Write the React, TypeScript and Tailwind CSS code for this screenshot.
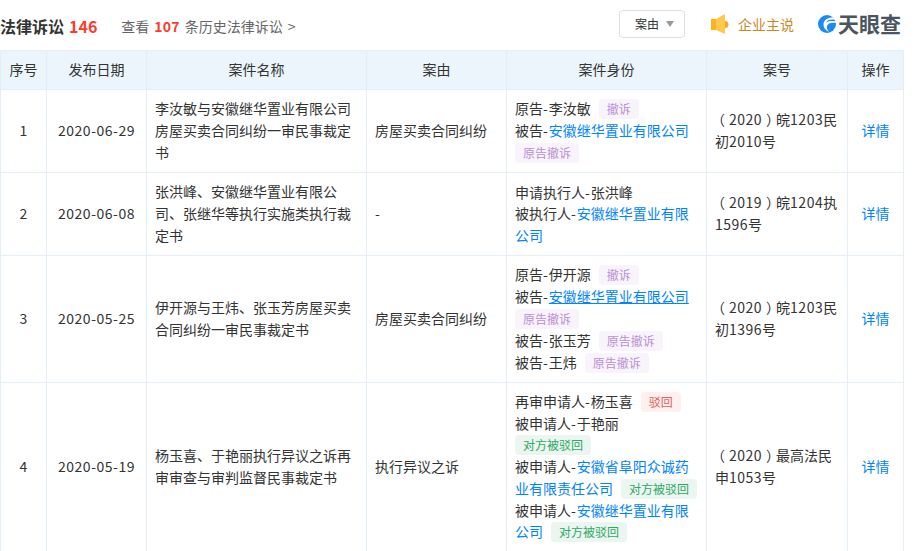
const font = { fontFamily: '"Noto Sans CJK SC", sans-serif' };

function Tag({ c, children }: { c: "p" | "r" | "g"; children: React.ReactNode }) {
  const cls =
    c === "p"
      ? "bg-[#f9f4fc] text-[#b88fd6]"
      : c === "r"
      ? "bg-[#fdf0ef] text-[#e8605a]"
      : "bg-[#ebf6f0] text-[#2da866]";
  return <span className={`inline-block align-top my-px h-5 leading-5 px-2 text-xs rounded-sm ${cls}`}>{children}</span>;
}

function A({ u, children }: { u?: boolean; children: React.ReactNode }) {
  return <span className={`text-[#0084ff] ${u ? "underline" : ""}`}>{children}</span>;
}

function D() {
  return <span className="tracking-[1px]">-</span>;
}

function Num({ y, a, n1, b, n2 }: { y: string; a: string; n1?: string; b: string; n2: string }) {
  return (
    <>
      <span className="-ml-1 mr-1">（</span>
      <span className="tracking-[0.5px]">{y}</span>
      <span className="ml-1 -mr-1">）</span>
      {a}
      {n1 && <span className="tracking-[0.5px]">{n1}</span>}
      {b}
      <span className="tracking-[0.5px]">{n2}</span>号
    </>
  );
}

const cell = "border-r border-b border-[#e4eef6]";

function Row({ n, date, name, cause, num, h, children }: any) {
  return (
    <tr className={h}>
      <td className={`${cell} border-l text-center pb-[2px]`}>{n}</td>
      <td className={`${cell} text-center tracking-[0.5px] pb-[2px]`}>{date}</td>
      <td className={`${cell} px-2 pb-[2px]`}>{name}</td>
      <td className={`${cell} px-2 pb-[2px]`}>{cause}</td>
      <td className={`${cell} px-2 py-2 leading-[21.6px]`}>{children}</td>
      <td className={`${cell} px-2 pb-[2px]`}>{num}</td>
      <td className={`${cell} text-center text-[#0084ff] pb-[2px]`}>详情</td>
    </tr>
  );
}

export default function App() {
  return (
    <div style={font} className="w-[917px] h-[551px] overflow-hidden bg-white text-sm leading-[22px] text-[#333]">
      <div className="h-[50px] flex items-center w-[904px] pr-[3px]">
        <div className="flex items-center mt-[2px]">
          <span className="text-base font-bold text-[#333]">法律诉讼</span>
          <span className="text-base font-bold text-[#ff3b30] ml-[5px]">146</span>
          <span className="ml-[24px] text-[#666]">查看</span>
          <span className="ml-[5px] font-bold text-[#ff3b30] tracking-[0.2px]">107</span>
          <span className="ml-[5px] text-[#666]">条历史法律诉讼</span>
          <span className="ml-[5px] text-[#666]">&gt;</span>
        </div>
        <div className="ml-auto flex items-center -mt-[2px]">
          <div className="w-[66px] h-7 border border-[#dddddd] rounded-sm flex items-center pl-[15px] text-xs text-[#333]">
            <span>案由</span>
            <span className="ml-[7px] w-0 h-0 border-x-[4px] border-x-transparent border-t-[6px] border-t-[#999999]" />
          </div>
          <svg className="ml-[26px]" width="19" height="20" viewBox="0 0 19 20">
            <rect x="0" y="5" width="5" height="11" fill="#fdb21e" />
            <path d="M5 5 L14 0 V20 L5 16 Z" fill="#fdc94f" />
            <path d="M14 7 A3.5 3.5 0 0 1 14 14 Z" fill="#f9a825" />
          </svg>
          <span className="ml-2 text-[#c98a1d]">企业主说</span>
          <svg className="ml-6" width="18" height="18" viewBox="0 0 18 18">
            <circle cx="9" cy="9" r="9" fill="#1a8cf0" />
            <path d="M18 3 C12 1.5 6 4 5.5 9 C5.2 12 7 15 11 17 C8 13 8.5 10 11 8.5 C13 7.5 15.5 7.5 18 8 Z" fill="#fff" />
            <path d="M17 5 C13 3.8 9.5 5 8 7.5 C10 6 13.5 5.5 17 6.2 Z" fill="#1a8cf0" />
          </svg>
          <span className="ml-[2px] -mt-[2px] text-[21px] font-bold text-[#4a5560]">天眼查</span>
        </div>
      </div>
      <table className="w-[904px] table-fixed border-separate border-spacing-0">
        <colgroup>
          <col className="w-[47px]" />
          <col className="w-[100px]" />
          <col className="w-[220px]" />
          <col className="w-[140px]" />
          <col className="w-[200px]" />
          <col className="w-[141px]" />
          <col className="w-[56px]" />
        </colgroup>
        <thead>
          <tr className="h-[40px] bg-[#ecf5fc]">
            {["序号", "发布日期", "案件名称", "案由", "案件身份", "案号", "操作"].map((t, i) => (
              <th key={t} className={`${cell} border-t ${i === 0 ? "border-l" : ""} pb-[2px] font-normal text-center`}>{t}</th>
            ))}
          </tr>
        </thead>
        <tbody>
          <Row h="h-[83px]" n="1" date="2020-06-29" name="李汝敏与安徽继华置业有限公司房屋买卖合同纠纷一审民事裁定书" cause="房屋买卖合同纠纷" num={<Num y="2020" a="皖" n1="1203" b="民初" n2="2010" />}>
            <div><span className="mr-2">原告<D />李汝敏</span><Tag c="p">撤诉</Tag></div>
            <div><span className="mr-2">被告<D /><A>安徽继华置业有限公司</A></span><Tag c="p">原告撤诉</Tag></div>
          </Row>
          <Row h="h-[83px]" n="2" date="2020-06-08" name="张洪峰、安徽继华置业有限公司、张继华等执行实施类执行裁定书" cause="-" num={<Num y="2019" a="皖" n1="1204" b="执" n2="1596" />}>
            <div>申请执行人<D />张洪峰</div>
            <div>被执行人<D /><A>安徽继华置业有限公司</A></div>
          </Row>
          <Row h="h-[126px]" n="3" date="2020-05-25" name="伊开源与王炜、张玉芳房屋买卖合同纠纷一审民事裁定书" cause="房屋买卖合同纠纷" num={<Num y="2020" a="皖" n1="1203" b="民初" n2="1396" />}>
            <div><span className="mr-2">原告<D />伊开源</span><Tag c="p">撤诉</Tag></div>
            <div><span className="mr-2">被告<D /><A u>安徽继华置业有限公司</A></span><Tag c="p">原告撤诉</Tag></div>
            <div><span className="mr-2">被告<D />张玉芳</span><Tag c="p">原告撤诉</Tag></div>
            <div><span className="mr-2">被告<D />王炜</span><Tag c="p">原告撤诉</Tag></div>
          </Row>
          <Row h="h-[169px]" n="4" date="2020-05-19" name="杨玉喜、于艳丽执行异议之诉再审审查与审判监督民事裁定书" cause="执行异议之诉" num={<Num y="2020" a="最高法民申" b="" n2="1053" />}>
            <div><span className="mr-2">再审申请人<D />杨玉喜</span><Tag c="r">驳回</Tag></div>
            <div><span className="mr-2">被申请人<D />于艳丽</span><Tag c="g">对方被驳回</Tag></div>
            <div><span className="mr-2">被申请人<D /><A>安徽省阜阳众诚药业有限责任公司</A></span><Tag c="g">对方被驳回</Tag></div>
            <div><span className="mr-2">被申请人<D /><A>安徽继华置业有限公司</A></span><Tag c="g">对方被驳回</Tag></div>
          </Row>
        </tbody>
      </table>
    </div>
  );
}
